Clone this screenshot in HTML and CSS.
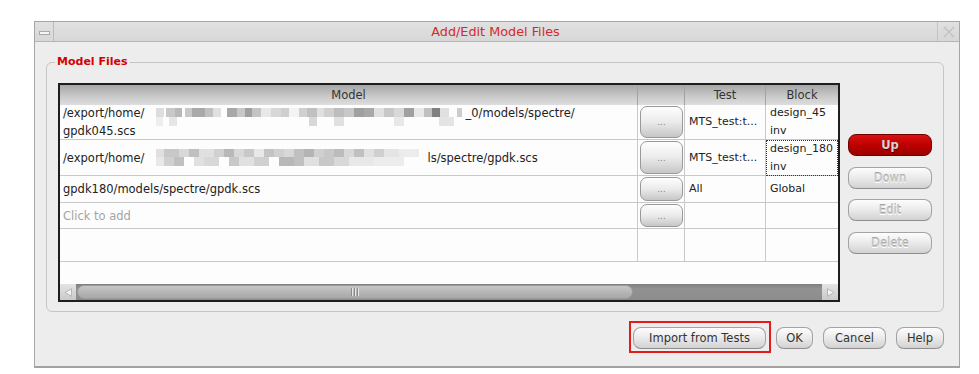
FILE: index.html
```html
<!DOCTYPE html>
<html>
<head>
<meta charset="utf-8">
<title>Add/Edit Model Files</title>
<link rel="stylesheet" href="styles.css">
</head>
<body>
<div class="window">
  <div class="titlebar">
    <div class="tb-btn tb-min"><span class="min-bar"></span></div>
    <div class="tb-title">Add/Edit Model Files</div>
    <div class="tb-btn tb-close">
      <svg width="14" height="14" viewBox="0 0 14 14"><path d="M2 2 L12 12 M12 2 L2 12" stroke="#c2c2c2" stroke-width="1.4" fill="none"/><path d="M3 2 L6 2 M2 3 L2 6 M11 12 L8 12 M12 11 L12 8" stroke="#d2d2d2" stroke-width="1" fill="none"/></svg>
    </div>
  </div>
  <div class="content">
    <fieldset class="group">
      <legend>Model Files</legend>
      <div class="group-body">
        <div class="table">
          <div class="row head">
            <div class="cell">Model</div>
            <div class="cell"></div>
            <div class="cell">Test</div>
            <div class="cell">Block</div>
          </div>
          <div class="row r1">
            <div class="cell model"><div class="txt">/export/home/<span class="mos1"></span>_0/models/spectre/<br>gpdk045.scs</div></div>
            <div class="cell dcell"><button class="dots">...</button></div>
            <div class="cell tcell"><div class="txt">MTS_test:t...</div></div>
            <div class="cell tcell"><div class="txt">design_45<br>inv</div></div>
          </div>
          <div class="row r2">
            <div class="cell model"><div class="txt">/export/home/<span class="mos2"></span>ls/spectre/gpdk.scs</div></div>
            <div class="cell dcell"><button class="dots">...</button></div>
            <div class="cell tcell"><div class="txt">MTS_test:t...</div></div>
            <div class="cell tcell focus"><div class="txt">design_180<br>inv</div></div>
          </div>
          <div class="row r3">
            <div class="cell model"><div class="txt">gpdk180/models/spectre/gpdk.scs</div></div>
            <div class="cell dcell"><button class="dots">...</button></div>
            <div class="cell tcell"><div class="txt">All</div></div>
            <div class="cell tcell"><div class="txt">Global</div></div>
          </div>
          <div class="row r4">
            <div class="cell model"><div class="txt hint">Click to add</div></div>
            <div class="cell dcell"><button class="dots">...</button></div>
            <div class="cell tcell"></div>
            <div class="cell tcell"></div>
          </div>
          <div class="row r5">
            <div class="cell model"></div>
            <div class="cell dcell"></div>
            <div class="cell tcell"></div>
            <div class="cell tcell"></div>
          </div>
          <div class="table-fill"></div>
          <div class="hscroll">
            <div class="sb-arrow"><svg width="9" height="9" viewBox="0 0 9 9"><path d="M7.5 0.8 L1 4.5 L7.5 8.2 Z" fill="#f4f4f4" stroke="#a8a8a8" stroke-width="0.8"/></svg></div>
            <div class="sb-trough"><div class="sb-handle"><span class="grip"></span></div></div>
            <div class="sb-arrow"><svg width="9" height="9" viewBox="0 0 9 9"><path d="M1.5 0.8 L8 4.5 L1.5 8.2 Z" fill="#f4f4f4" stroke="#a8a8a8" stroke-width="0.8"/></svg></div>
          </div>
        </div>
        <div class="side">
          <button class="btn btn-red">Up</button>
          <button class="btn btn-off">Down</button>
          <button class="btn btn-off">Edit</button>
          <button class="btn btn-off">Delete</button>
        </div>
      </div>
    </fieldset>
    <div class="footer">
      <span class="mark"><button class="btn b-import">Import from Tests</button></span>
      <button class="btn b-ok">OK</button>
      <button class="btn b-cancel">Cancel</button>
      <button class="btn b-help">Help</button>
    </div>
  </div>
</div>
</body>
</html>
```
FILE: styles.css
```css
* { box-sizing: border-box; }
body {
  margin: 0;
  background: #ffffff;
  font-family: "DejaVu Sans", sans-serif;
  font-size: 11.5px;
  color: #222;
}
.window {
  margin: 21px 0 0 34px;
  width: 926px;
  height: 347px;
  border: 1px solid #a6a6a6;
  border-bottom: 2px solid #a2a2a2;
  background: #ededed;
  display: flex;
  flex-direction: column;
}
.titlebar {
  height: 20px;
  flex: none;
  display: flex;
  border-bottom: 1px solid #b6b6b6;
  background: linear-gradient(#e1e1e1, #d7d7d7);
}
.tb-btn {
  flex: none;
  display: flex;
  align-items: center;
  justify-content: center;
}
.tb-min { width: 19px; border-right: 1px solid #bcbcbc; }
.tb-close { width: 22px; border-left: 1px solid #c4c4c4; }
.min-bar {
  width: 11px;
  height: 4px;
  border: 1px solid #a9a9a9;
  background: #f6f6f6;
  margin-top: 2px;
}
.tb-title {
  flex: 1;
  text-align: center;
  color: #d42a2a;
  font-size: 12.8px;
  line-height: 19px;
}
.content {
  flex: 1;
  padding: 13px 15px 0 11px;
  display: flex;
  flex-direction: column;
}
.group {
  margin: 0;
  padding: 0;
  min-width: 0;
  border: 1px solid #c6c6c6;
  border-radius: 6px;
}
.group legend {
  margin-left: 8px;
  padding: 0 2px;
  color: #d40000;
  font-weight: bold;
  font-size: 11px;
  line-height: 14px;
}
.group-body {
  display: flex;
  align-items: flex-start;
  gap: 8px;
  padding: 14px 11px 9px 11px;
}
.table {
  flex: none;
  width: 782px;
  height: 219px;
  border: 2px solid #1e1e1e;
  background: #fdfdfd;
  display: flex;
  flex-direction: column;
}
.row {
  display: grid;
  grid-template-columns: 578px 47px 81px 72px;
  flex: none;
}
.cell {
  display: flex;
  align-items: center;
  border-right: 1px solid #c9c9c9;
  border-bottom: 1px solid #c9c9c9;
  line-height: 18px;
  white-space: nowrap;
  overflow: hidden;
}
.cell:last-child { border-right: none; }
.head {
  height: 20px;
  background: linear-gradient(#a6a6a6, #c8c8c8 55%, #dedede);
}
.head .cell {
  justify-content: center;
  border-bottom: none;
  border-right-color: #a2a2a2;
  color: #333;
}
.r1 { height: 35px; }
.r2 { height: 36px; }
.r3 { height: 27px; }
.r4 { height: 26px; }
.r5 { height: 33px; }
.model { padding-left: 3px; }
.tcell { padding-left: 4px; font-size: 11px; }
.hint { color: #a4a4a4; }
.focus { outline: 1px dotted #333; outline-offset: -1px; }
.dcell { padding: 1px 1px 1px 2px; align-items: stretch; }
.dots {
  width: 100%;
  margin: 0;
  padding: 0;
  border: 1px solid #999;
  border-radius: 7px;
  background: linear-gradient(#fefefe, #ebebeb 50%, #c6c6c6);
  font-family: "DejaVu Sans", sans-serif;
  font-size: 9px;
  color: #888;
}
.mos1 {
  display: inline-block;
  vertical-align: top;
  width: 321px;
  height: 22px;
  margin-bottom: -4px;
  background-repeat: no-repeat;
  background-size: 321px 9px, 321px 9px;
  background-position: 0 4px, 0 13px;
  background-image:
    linear-gradient(90deg, transparent 0 12px, #ddd 12px 20px, transparent 20px 22px, #c8c8c8 22px 31px, #b8b8b8 31px 38px, transparent 38px 41px, #c8c8c8 41px 48px, #a9a9a9 48px 61px, #c0c0c0 61px 69px, #e0e0e0 69px 77px, transparent 77px 83px, #a8a8a8 83px 93px, #c8c8c8 93px 101px, #a0a0a0 101px 108px, #c4c4c4 108px 117px, #e8e8e8 117px 127px, #d8d8d8 127px 137px, #cfcfcf 137px 145px, #f4f4f4 145px 155px, #d0d0d0 155px 163px, #c0c0c0 163px 173px, #e0e0e0 173px 180px, #d0d0d0 180px 190px, #bdbdbd 190px 200px, #c8c8c8 200px 210px, #a0a0a0 210px 220px, #a8a8a8 220px 230px, #e0e0e0 230px 240px, #c8c8c8 240px 250px, #d8d8d8 250px 260px, #a0a0a0 260px 270px, #e8e8e8 270px 280px, #c0c0c0 280px 288px, #808080 288px 296px, #e0e0e0 296px 305px, transparent 305px 313px, #cccccc 313px 318px, transparent 318px),
    linear-gradient(90deg, transparent 0 12px, #eeeeee 12px 19px, transparent 19px 25px, #e6e6e6 25px 33px, transparent 33px 165px, #d8d8d8 165px 173px, transparent 173px 190px, #e0e0e0 190px 200px, transparent 200px 250px, #e8e8e8 250px 260px, transparent 260px 295px, #e4e4e4 295px 310px, transparent 310px);
}
.mos2 {
  display: inline-block;
  vertical-align: top;
  width: 283px;
  height: 18px;
  background-repeat: no-repeat;
  background-size: 283px 8px, 283px 9px;
  background-position: 0 0, 0 8px;
  background-image:
    linear-gradient(90deg, transparent 0 12px, #e0e0e0 12px 20px, #c8c8c8 20px 35px, #d8d8d8 35px 45px, #c0c0c0 45px 55px, #e0e0e0 55px 70px, #d0d0d0 70px 80px, #b8b8b8 80px 90px, #d8d8d8 90px 100px, #c8c8c8 100px 110px, #e8e8e8 110px 120px, #c4c4c4 120px 130px, #d0d0d0 130px 140px, #d8d8d8 140px 150px, #c0c0c0 150px 160px, #b4b4b4 160px 170px, #d0d0d0 170px 180px, #c8c8c8 180px 190px, #bcbcbc 190px 200px, #d8d8d8 200px 210px, #c0c0c0 210px 220px, #e0e0e0 220px 230px, #cfcfcf 230px 240px, #e4e4e4 240px 255px, #ececec 255px 275px, transparent 275px),
    linear-gradient(90deg, transparent 0 12px, #e8e8e8 12px 20px, #d0d0d0 20px 30px, #c0c0c0 30px 40px, transparent 40px 50px, #e0e0e0 50px 60px, #d8d8d8 60px 75px, transparent 75px 85px, #c8c8c8 85px 95px, #e0e0e0 95px 110px, #d0d0d0 110px 125px, transparent 125px 135px, #b8b8b8 135px 150px, #c0c0c0 150px 160px, #e0e0e0 160px 175px, #c8c8c8 175px 190px, #d8d8d8 190px 205px, #e8e8e8 205px 230px, #ececec 230px 260px, transparent 260px);
}
.table-fill { flex: 1; }
.hscroll {
  flex: none;
  height: 16px;
  display: flex;
}
.sb-arrow {
  width: 16px;
  flex: none;
  display: flex;
  align-items: center;
  justify-content: center;
  background: linear-gradient(#e4e4e4, #c9c9c9);
}
.sb-trough {
  flex: 1;
  background: linear-gradient(#7f7f7f, #929292 30%, #8c8c8c);
  padding: 1px 189px 1px 1px;
}
.sb-handle {
  height: 100%;
  border: 1px solid #9a9a9a;
  border-radius: 7px;
  background: linear-gradient(#c6c6c6, #b3b3b3 60%, #a9a9a9);
  display: flex;
  align-items: center;
  justify-content: center;
}
.grip {
  width: 8px;
  height: 8px;
  background: repeating-linear-gradient(90deg, #8a8a8a 0 1px, #e6e6e6 1px 2px, transparent 2px 3px);
}
.side {
  flex: none;
  width: 84px;
  margin-top: 51px;
  display: flex;
  flex-direction: column;
  gap: 10.5px;
}
.btn {
  height: 22px;
  margin: 0;
  padding: 0;
  border: 1px solid #a3a3a3;
  border-bottom-color: #8e8e8e;
  border-radius: 8px;
  background: linear-gradient(#fdfdfd, #ececec 45%, #d2d2d2);
  font-family: "DejaVu Sans", sans-serif;
  font-size: 11.5px;
  color: #333;
}
.btn-red {
  border-color: #6e0000;
  background: linear-gradient(#dc1010, #bc0000 50%, #9c0000);
  color: #d4d4d4;
  font-weight: bold;
  text-shadow: 0 1px 0 #5a0000;
}
.btn-off {
  color: #cdcdcd;
  text-shadow: 0 -1px 0 #a6a6a6, 0 1px 0 #ffffff;
}
.footer {
  margin-top: 15px;
  display: flex;
  justify-content: flex-end;
  gap: 10px;
}
.mark { position: relative; display: flex; }
.mark::after {
  content: "";
  position: absolute;
  left: -4px;
  right: -5px;
  top: -6px;
  bottom: -4px;
  border: 2px solid #e31b1b;
  pointer-events: none;
}
.b-import { width: 133px; }
.b-ok { width: 37px; }
.b-cancel { width: 63px; }
.b-help { width: 48px; }
```
